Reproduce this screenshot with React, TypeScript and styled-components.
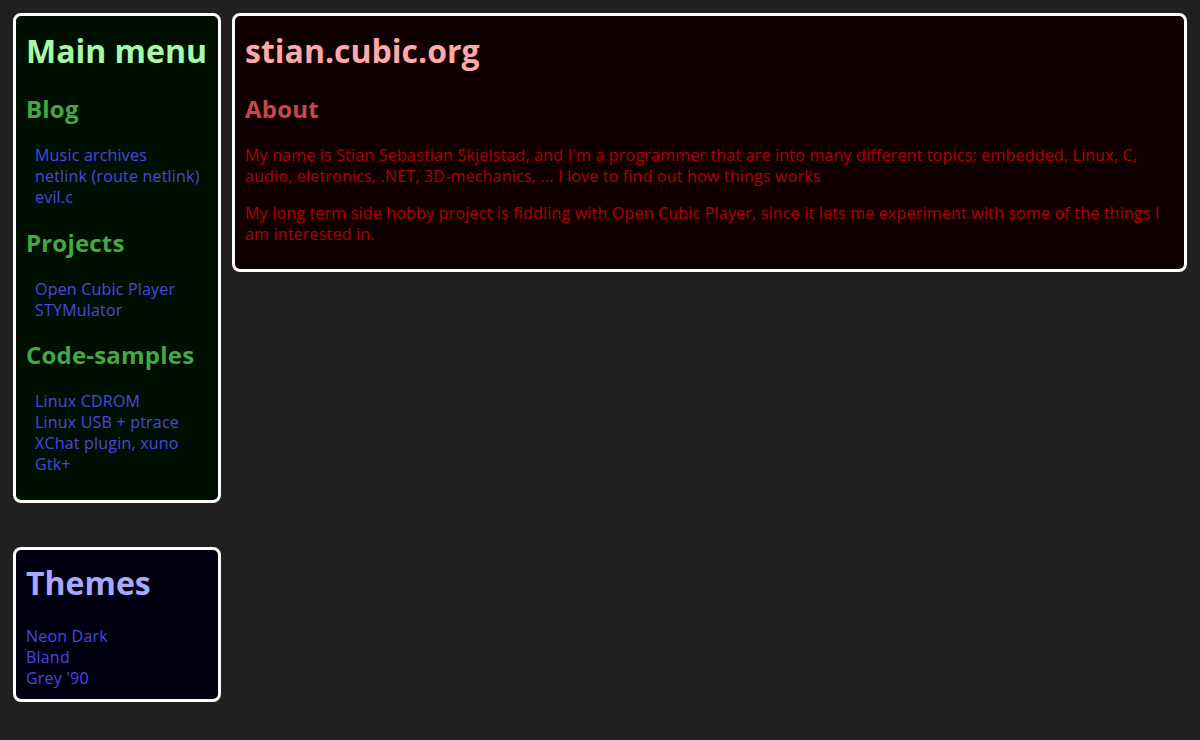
import React from "react";
import styled, { createGlobalStyle } from "styled-components";

const GlobalStyle = createGlobalStyle`
  html, body {
    margin: 0;
    padding: 0;
    background: #202020;
  }
  body {
    font-family: "Open Sans", "Noto Sans", sans-serif;
    font-size: 16px;
  }
`;

const Page = styled.div`
  display: flex;
  align-items: flex-start;
  gap: 11px;
  padding: 13px;
`;

const Sidebar = styled.aside`
  flex: 0 0 208px;
  display: flex;
  flex-direction: column;
  gap: 44px;
`;

const Panel = styled.section<{ $bg: string; $pad: string }>`
  box-sizing: border-box;
  border: 3px solid #ffffff;
  border-radius: 8px;
  padding: ${(p) => p.$pad};
  background: ${(p) => p.$bg};
`;

const MainPanel = styled(Panel)`
  flex: 1 1 auto;
`;

const Title = styled.h1<{ $color: string }>`
  margin: 0 0 21.44px;
  font-size: 32px;
  line-height: 42px;
  font-weight: 700;
  color: ${(p) => p.$color};
  white-space: nowrap;
`;

const SectionTitle = styled.h2<{ $color: string }>`
  margin: 18.4px 0 19.92px;
  font-size: 24px;
  line-height: 32px;
  font-weight: 700;
  letter-spacing: 0.2px;
  color: ${(p) => p.$color};
`;

const LinkList = styled.ul`
  list-style: none;
  margin: 16px 0;
  padding: 0 0 0 9px;
`;

const ThemeList = styled.ul`
  list-style: none;
  margin: 22px 0 0;
  padding: 0;
`;

const Item = styled.li`
  font-size: 16px;
  line-height: 21px;
  letter-spacing: 0.2px;
`;

const Link = styled.a`
  color: #4848e0;
  text-decoration: none;
`;

const Paragraph = styled.p`
  margin: 16px 0;
  font-size: 16px;
  line-height: 21px;
  letter-spacing: 0.2px;
  color: #b00000;
`;

const menu: { title: string; links: string[] }[] = [
  { title: "Blog", links: ["Music archives", "netlink (route netlink)", "evil.c"] },
  { title: "Projects", links: ["Open Cubic Player", "STYMulator"] },
  {
    title: "Code-samples",
    links: ["Linux CDROM", "Linux USB + ptrace", "XChat plugin, xuno", "Gtk+"],
  },
];

const themes = ["Neon Dark", "Bland", "Grey '90"];

export default function App() {
  return (
    <>
      <GlobalStyle />
      <Page>
        <Sidebar>
          <Panel $bg="#001000" $pad="14px 10px 9px">
            <Title $color="#a8f8a8">Main menu</Title>
            {menu.map((section) => (
              <React.Fragment key={section.title}>
                <SectionTitle $color="#44a844">{section.title}</SectionTitle>
                <LinkList>
                  {section.links.map((l) => (
                    <Item key={l}>
                      <Link href="#">{l}</Link>
                    </Item>
                  ))}
                </LinkList>
              </React.Fragment>
            ))}
          </Panel>
          <Panel $bg="#000010" $pad="12px 10px 10px">
            <Title $color="#a8a8ff">Themes</Title>
            <ThemeList>
              {themes.map((t) => (
                <Item key={t}>
                  <Link href="#">{t}</Link>
                </Item>
              ))}
            </ThemeList>
          </Panel>
        </Sidebar>
        <MainPanel $bg="#100000" $pad="14px 10px 8px">
          <Title $color="#ffa8a8">stian.cubic.org</Title>
          <SectionTitle $color="#c84848">About</SectionTitle>
          <Paragraph>
            My name is Stian Sebastian Skjelstad, and I'm a programmer that are into many
            different topics; embedded, Linux, C, audio, eletronics, .NET, 3D-mechanics, ... I
            love to find out how things works
          </Paragraph>
          <Paragraph>
            My long term side hobby project is fiddling with Open Cubic Player, since it lets me
            experiment with some of the things I am interested in.
          </Paragraph>
        </MainPanel>
      </Page>
    </>
  );
}
